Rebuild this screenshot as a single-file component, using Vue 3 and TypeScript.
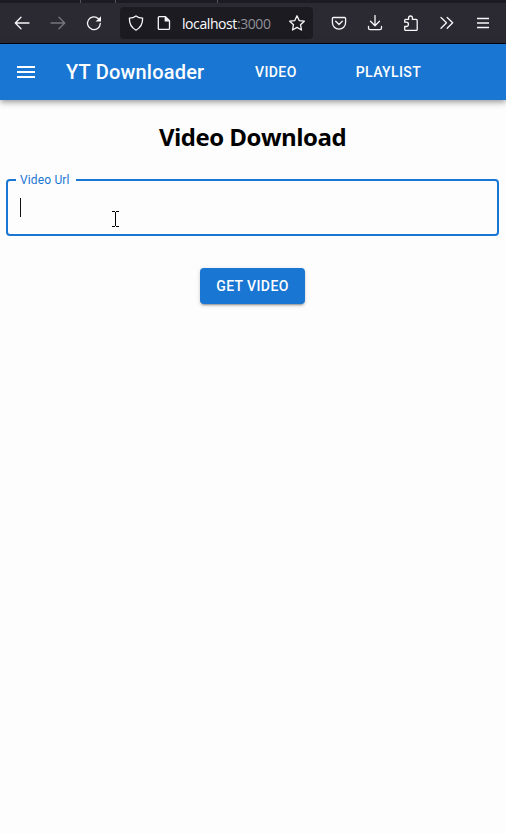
<script setup lang="ts">
import { ref } from 'vue'

const navItems: string[] = ['Video', 'Playlist']
const url = ref('')
</script>

<template>
  <div class="window">
    <div class="tabstrip"><i class="sep first"></i><i class="sep second"></i><i class="sep third"></i></div>
    <div class="toolbar">
      <span class="tool"><svg viewBox="0 0 16 16"><path d="M15 8H1.5M7 2.2 1.3 8 7 13.8" /></svg></span>
      <span class="tool dim"><svg viewBox="0 0 16 16"><path d="M1 8h13.5M9 2.2 14.7 8 9 13.8" /></svg></span>
      <span class="tool"><svg viewBox="0 0 16 16"><path d="M14.3 8.5A6.4 6.4 0 1 1 12.4 3.7" /><path class="solid" d="M15 1.3v5.2H9.6z" /></svg></span>
      <div class="address">
        <span class="inner-tool"><svg viewBox="0 0 16 16"><path d="M8 .9c2 1.5 4.3 2.1 6.6 2.3.2 5-1.6 9.1-6.6 12C3 12.300 1.200 8.200 1.400 3.200 3.700 3 6 2.400 8 .9z" /></svg></span>
        <span class="inner-tool page"><svg viewBox="0 0 16 16"><path d="M3.300 1.700h6.200l4 4v7.700q0 1-1 1H3.300q-1 0-1-1V2.700q0-1 1-1z" /><path class="solid" d="M8.600 1.200v5.400h5.300z" /></svg></span>
        <span class="host">localhost<span class="port">:3000</span></span>
        <span class="inner-tool star"><svg viewBox="0 0 16 16"><path d="m8 .8 2.200 4.800 5.100.6-3.800 3.500 1 5.300L8 12.400 3.500 15l1-5.300L.7 6.200l5.100-.6z" /></svg></span>
      </div>
      <span class="tool"><svg viewBox="0 0 16 16"><path d="M2.400 2.500h11.200q1 0 1 1V7.500a6.600 6.600 0 0 1-13.200 0V3.500q0-1 1-1zM4.700 6.300 8 9.500l3.300-3.200" /></svg></span>
      <span class="tool"><svg viewBox="0 0 16 16"><path d="M8 .5v10M3.500 6.300 8 10.700l4.500-4.400M1.500 11.500V13q0 1.600 1.600 1.600h9.800q1.600 0 1.600-1.600v-1.500" /></svg></span>
      <span class="tool"><svg viewBox="0 0 16 16"><path d="M1.700 7.200V5.400q0-1 1-1h2.900V2.900a1.900 1.900 0 0 1 3.800 0v1.500h3.800q1 0 1 1v9q0 1-1 1H2.700q-1 0-1-1v-2.900h1.600a2.100 2.100 0 0 0 0-4.300z" /></svg></span>
      <span class="tool"><svg viewBox="0 0 16 16"><path d="m2 2.500 5.500 5.300L2 13.200M8.200 2.500l5.500 5.300-5.500 5.400" /></svg></span>
      <span class="tool menu"><svg viewBox="0 0 16 16"><path d="M2 3.500h12M2 8h12M2 12.500h12" /></svg></span>
    </div>

    <header class="appbar">
      <svg class="burger" viewBox="0 0 24 24"><path d="M3 18h18v-2H3v2zm0-5h18v-2H3v2zm0-7v2h18V6H3z" /></svg>
      <span class="brand">YT Downloader</span>
      <nav class="nav">
        <a v-for="item in navItems" :key="item" class="nav-item">{{ item }}</a>
      </nav>
    </header>

    <main class="content">
      <h1 class="title">Video Download</h1>
      <fieldset class="field">
        <legend>Video Url</legend>
        <span class="caret"></span>
        <input v-model="url" type="text" aria-label="Video Url" />
      </fieldset>
      <button class="submit">Get Video</button>
    </main>
    <svg class="pointer" viewBox="0 0 7 16"><path d="M0 .5h3M4 .5h3M3.500 1v14M0 15.500h3M4 15.500h3" /></svg>
  </div>
</template>

<style>
body {
  margin: 0;
  background: #fdfdfd;
}
</style>

<style scoped>
.window {
  position: relative;
  height: 833px;
  overflow: hidden;
  background: #fdfdfd;
  font-family: Roboto, sans-serif;
}
.tabstrip {
  display: flex;
  height: 3px;
  background: #1c1b22;
}
.sep {
  width: 1px;
  background: #55545c;
}
.first { margin-left: 80px; }
.second { margin-left: 34px; }
.third { margin-left: 101px; }
.toolbar {
  box-sizing: border-box;
  display: flex;
  align-items: center;
  height: 41px;
  padding-left: 4px;
  background: #2b2a33;
  border-bottom: 1px solid #050508;
}
.tool {
  display: flex;
  justify-content: center;
  width: 36px;
}
.toolbar svg {
  display: block;
  width: 16px;
  height: 16px;
  fill: none;
  stroke: #f7f7f9;
  stroke-width: 1.3;
  stroke-linecap: round;
  stroke-linejoin: round;
}
.toolbar .dim svg { stroke: #77767d; }
.toolbar .menu svg { stroke-linecap: butt; stroke-width: 1.3; }
.toolbar .solid {
  fill: #f7f7f9;
  stroke: none;
}
.address {
  box-sizing: border-box;
  display: flex;
  align-items: center;
  width: 193px;
  height: 32px;
  margin: 0 8px;
  padding: 0 8px;
  border-radius: 4px;
  background: #1c1b22;
}
.page { margin-left: 12px; }
.host {
  margin-left: 10px;
  padding-top: 2px;
  color: #fbfbfe;
  font: 400 14px/20px "Open Sans", "Noto Sans", sans-serif;
  letter-spacing: -.42px;
  white-space: nowrap;
}
.port { color: #8f8f96; }
.star { margin-left: auto; }
.appbar {
  position: relative;
  display: flex;
  align-items: center;
  height: 56px;
  padding-left: 14px;
  background: #1976d2;
  color: #fff;
  box-shadow: 0 2px 4px -1px rgba(0, 0, 0, .2), 0 4px 5px rgba(0, 0, 0, .14), 0 1px 10px rgba(0, 0, 0, .12);
}
.burger {
  width: 24px;
  height: 24px;
  fill: #fff;
}
.brand {
  width: 173px;
  margin-left: 28px;
  font-size: 20px;
  font-weight: 500;
  letter-spacing: .2px;
}
.nav {
  display: flex;
  gap: 59px;
  margin-left: 16px;
}
.nav-item {
  font-size: 14px;
  font-weight: 500;
  letter-spacing: .4px;
  text-transform: uppercase;
}
.content {
  display: flex;
  flex-direction: column;
  align-items: center;
  padding: 19px 7px 0 6px;
}
.title {
  margin: 0;
  color: #000;
  font: 700 24px/36px "Open Sans", "Noto Sans", sans-serif;
  letter-spacing: -.5px;
}
.field {
  box-sizing: border-box;
  display: flex;
  width: 100%;
  height: 63px;
  min-width: 0;
  margin: 18px 0 0;
  padding: 0 12px;
  border: 2px solid #1976d2;
  border-radius: 4px;
}
.field legend {
  height: 14px;
  margin-left: -4px;
  padding: 0 6px 0 4px;
  color: #1976d2;
  font-size: 12px;
  line-height: 14px;
  letter-spacing: .15px;
}
.caret {
  flex: none;
  width: 1px;
  height: 19px;
  margin-top: 11px;
  background: #111;
}
.field input {
  flex: 1;
  min-width: 0;
  height: 20px;
  margin-top: 11px;
  padding: 0;
  border: 0;
  outline: 0;
  background: transparent;
  font: 16px Roboto, sans-serif;
}
.submit {
  width: 105px;
  height: 36px;
  margin-top: 32px;
  padding: 0;
  border: 0;
  border-radius: 4px;
  background: #1976d2;
  color: #fff;
  font: 500 14px/24px Roboto, sans-serif;
  letter-spacing: .4px;
  text-transform: uppercase;
  white-space: nowrap;
  box-shadow: 0 3px 1px -2px rgba(0, 0, 0, .2), 0 2px 2px rgba(0, 0, 0, .14), 0 1px 5px rgba(0, 0, 0, .12);
}
.pointer {
  position: absolute;
  top: 211px;
  left: 112px;
  width: 7px;
  height: 16px;
  fill: none;
  stroke: #000;
}
</style>
